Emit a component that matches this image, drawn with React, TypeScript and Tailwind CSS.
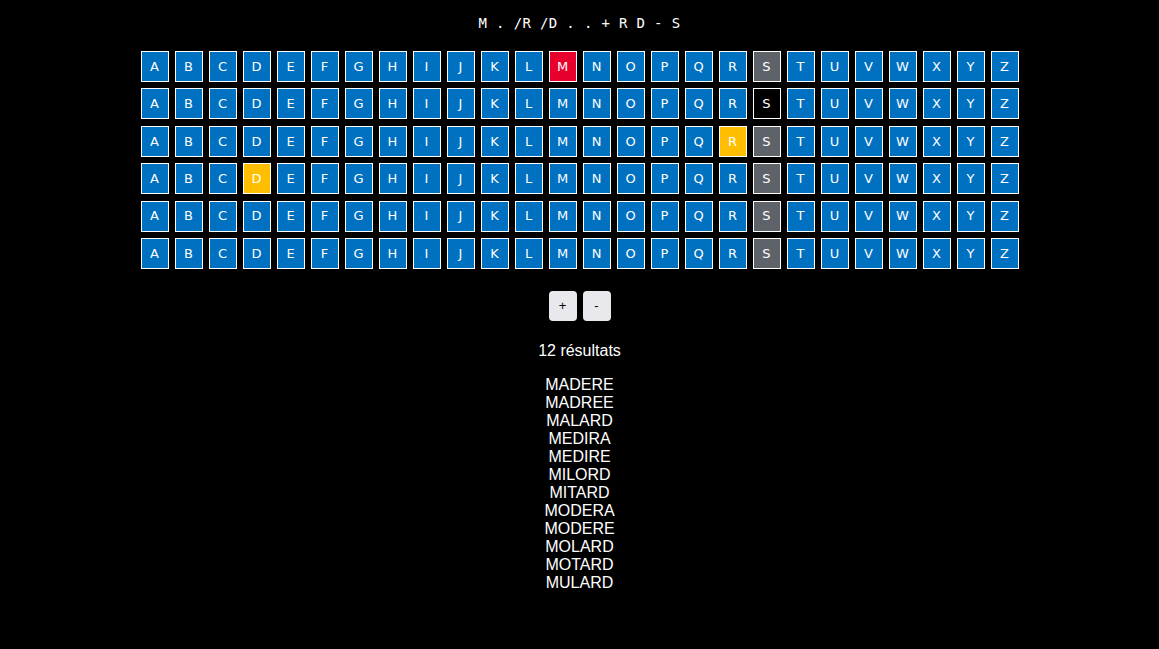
import React from 'react';

const LETTERS = 'ABCDEFGHIJKLMNOPQRSTUVWXYZ'.split('');

// per row: letter -> state
const ROWS: Record<string, string>[] = [
    { M: 'red', S: 'gray' },
    { S: 'black' },
    { R: 'yellow', S: 'gray' },
    { D: 'yellow', S: 'gray' },
    { S: 'gray' },
    { S: 'gray' },
];

const CELL_BG: Record<string, string> = {
    red: 'bg-[#e8002d]',
    gray: 'bg-[#5e6369]',
    black: 'bg-black',
    yellow: 'bg-[#ffbf00]',
};

const RESULTS = ['MADERE', 'MADREE', 'MALARD', 'MEDIRA', 'MEDIRE', 'MILORD', 'MITARD', 'MODERA', 'MODERE', 'MOLARD', 'MOTARD', 'MULARD'];

export default function App() {
    return (
        <div className="min-h-[649px] w-full bg-black text-white flex flex-col items-center">
            {/* pattern */}
            <div className="pt-[15px] h-[51px] font-['DejaVu_Sans_Mono',monospace] text-[14px] leading-[17px] tracking-[0.35px] whitespace-pre">
                M . /R /D . . + R D - S
            </div>

            {/* letter grid */}
            <div className="flex flex-col gap-[6.4px]">
                {ROWS.map((row, r) => (
                    <div key={r} className="flex gap-[6px]">
                        {LETTERS.map((l) => (
                            <div
                                key={l}
                                className={`w-[28px] h-[31px] border border-white flex items-center justify-center font-['DejaVu_Sans',sans-serif] text-[13px] text-white ${CELL_BG[row[l]] ?? 'bg-[#0070c0]'}`}
                            >
                                {l}
                            </div>
                        ))}
                    </div>
                ))}
            </div>

            {/* controls */}
            <div className="flex gap-[6px] mt-[22px]">
                <button className="w-[28px] h-[30px] rounded-[4px] bg-[#e9e9ed] text-black text-[13px] font-['Liberation_Sans',sans-serif]">+</button>
                <button className="w-[28px] h-[30px] rounded-[4px] bg-[#e9e9ed] text-black text-[13px] font-['Liberation_Sans',sans-serif]">-</button>
            </div>

            <p className="mt-[21px] font-['Liberation_Sans',Arial,sans-serif] text-[16px] leading-[18px]">12 résultats</p>

            <div className="mt-[16px] flex flex-col items-center font-['Liberation_Sans',Arial,sans-serif] text-[16px] leading-[18px]">
                {RESULTS.map((w) => (
                    <div key={w}>{w}</div>
                ))}
            </div>
        </div>
    );
}
